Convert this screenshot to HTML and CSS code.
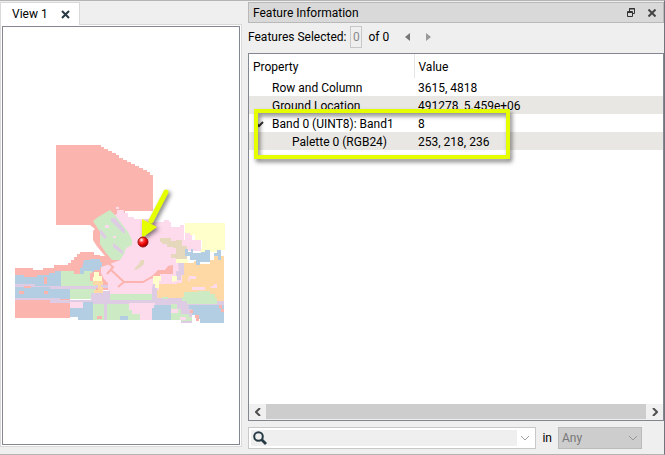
FILE: index.html
```html
<!DOCTYPE html>
<html lang="en">

<head>
    <meta charset="UTF-8" />
    <meta name="viewport" content="width=device-width, initial-scale=1.0" />
    <title>Feature Information</title>
    <link rel="stylesheet" href="styles.css">
</head>

<body>
    <section class="view">
        <div class="tab">
            <span>View 1</span>
            <button class="icon-btn" aria-label="Close view">
                <svg width="9" height="9" viewBox="0 0 9 9"><path d="M1 1L8 8M8 1L1 8" stroke="#263a45" stroke-width="2" /></svg>
            </button>
        </div>
        <div class="view-body">
            <div class="canvas">
                <svg class="map" width="212" height="181" viewBox="15 145 212 181">
                    <!-- base areas -->
                    <path fill="#fbb4ae" d="M56 145H101V147H104V149H108V151H112V153H116V155H119V158H123V160H127V162H131V164H135V166H139V168H143V170H147V172H150V175H153V211H125V264H114L105 256L100 250L96 245L93 240V231L95 229L90 225H56z" />
                    <path fill="#fbb4ae" d="M15 268H33V270H43V268H54V265H68V263H71V260H74V257H77V254H80V252H94V255H100V256H108V258H114V270H110V290H70V318H15z" />
                    <path fill="#fddaec" d="M112 216L117 214V210H124V213H128V217H134V219H150V222H164V220H169V222H171V227H180V225H184V262H186V300H108V283L104 279L101 273V267L110 264L120 260z" />
                    <!-- west blocks -->
                    <path fill="#b3cde3" d="M15 275H24V277H37V275H49V273H55V271H61V287H70V299H15z" />
                    <path fill="#b3cde3" d="M84 260H90V259H100V262H102V267H100V270H94V272H84V274H80V268H82z" />
                    <path fill="#ccebc5" d="M61 271H74V274H84V271H92V277H96V299H70V287H61z" />
                    <path fill="#decbe4" d="M15 284H35V286H96V289H50V287H15zM15 298H60V300H91V293H96V291H110V300H154V304H15zM96 285H108V288H96z" />
                    <path fill="#fbb4ae" d="M15 300H50V303H70V318H15zM24 286H31V288H24zM44 277H47V284H44zM19 291H24V294H19zM44 291H48V294H44zM90 273H94V281H90z" />
                    <path fill="#fddaec" d="M70 302H83V308H70z" />
                    <path fill="#b3cde3" d="M70 308H83V302H93V320H78V317H70z" />
                    <path fill="#ccebc5" d="M93 304H104V320H93zM106 304H130V310H132V314H140V320H106z" />
                    <path fill="#decbe4" d="M104 303H107V320H104z" />
                    <path fill="#ffffcc" d="M94 272H99V276H102V281H93V277H94z" />
                    <path fill="#fed9a6" d="M93 281H103V285H101V287H103V293H94V290H98V285H93z" />
                    <!-- centre -->
                    <path fill="#fbb4ae" d="M97 316H102V319H97z" />
                    <path fill="#ccebc5" d="M93 221L98 217L110 210L114 214L122 224L128 232L132 240V245L126 248L124 254L120 260H112L106 253L100 244V232z" />
                    <path fill="#decbe4" d="M111 218L115 218L119 223L125 230V234L121 231L111 221zM100 229L103 232L107 237L105 239L100 234zM113 243L116 245L124 252L122 254L113 247z" />
                    <path fill="#fddaec" d="M105 225H109V228H105zM113 236H116V238H113zM116 207H119V209H116z" />
                    <path fill="none" stroke="#fbb4ae" stroke-width="2" d="M107 262L113 267L107 274M110 269L124 282L118 287M124 282H143L157 274" />
                    <path fill="#fbb4ae" d="M153 275L158 270H165L168 266L173 265V274H160V276L150 279z" />
                    <path fill="#e5d8bd" d="M160 238H171V241H176V240H182V246H187V260H176V258H171V254H176V248H173V247H167V244H162V242H160zM134 269L138 265L141 260H144V264L141 267L136 270z" />
                    <!-- east blocks -->
                    <path fill="#ffffcc" d="M185 223H225V250H217V252H200V249H202V240H195V235H190V233H185zM176 259H188V263H176z" />
                    <path fill="#fddaec" d="M185 233H190V235H192V240H201V251H187V246H182V240H185z" />
                    <path fill="#fed9a6" d="M182 263H194V261H196V264H210V260H214V256H224V302H185V300H155V290H159V284H177V283H182z" />
                    <path fill="#b3cde3" d="M185 249H188V252H191V249H193V253H201V252H205V250H210V262H200V265H196V260H190V256H185zM214 253H217V250H221V260H218V256H214z" />
                    <path fill="#decbe4" d="M178 263H184V275H181V280H176V271H179zM153 284H157V300H152V289z" />
                    <path fill="#ffffcc" d="M153 276H161V281H159V288H155V284H153zM172 276H177V281H174V282H172z" />
                    <path fill="#fddaec" d="M189 276H196V279H190V281H188zM192 287H205V290H192zM211 286H214V284H217V288H211z" />
                    <path fill="#ccebc5" d="M110 294H152V300H110z" />
                    <path fill="#decbe4" d="M152 298H182V301H224V305H152zM171 304H192V323H181V311H171z" />
                    <path fill="#ccebc5" d="M184 292H198V291H210V294H215V298H217V304H187V301H182V297H184zM162 297H168V299H162z" />
                    <path fill="#fddaec" d="M129 303H155V308H152V320H140V314H132V310H129z" />
                    <path fill="#ccebc5" d="M171 304H177V309H181V314H189V317H192V321H181V320H171z" />
                    <path fill="#b3cde3" d="M120 316H128V320H120zM152 308H154V305H171V320H152zM189 305H224V323H200V319H197V315H192V309H189z" />
                    <path fill="#fddaec" d="M171 309H178V313H171zM180 317H186V320H180z" />
                    <path fill="#fbb4ae" d="M219 305H222V309H224V312H221V308H219zM190 310H193V313H190zM195 315H199V321H196V318H195z" />
                    <!-- arrow and picked point -->
                    <g class="arrow">
                        <path d="M166 192L151 221" stroke="#e6ff00" stroke-width="5" stroke-linecap="round" />
                        <path d="M142 238L142 219L157 227z" fill="#e6ff00" />
                    </g>
                    <defs>
                        <radialGradient id="ball" cx=".35" cy=".3" r=".7">
                            <stop offset="0" stop-color="#fff" />
                            <stop offset=".35" stop-color="#ff3b3b" />
                            <stop offset=".7" stop-color="#e80000" />
                            <stop offset="1" stop-color="#900000" />
                        </radialGradient>
                    </defs>
                    <circle cx="143" cy="242" r="5" fill="url(#ball)" stroke="#9c1010" />
                </svg>
            </div>
        </div>
    </section>

    <section class="info">
        <header class="title-bar">
            <h1>Feature Information</h1>
            <button class="icon-btn" aria-label="Float panel">
                <svg width="8" height="9" viewBox="0 0 8 9" fill="none" stroke="#333"><path d="M2.5 3V.5H7.5V5.5H6M2 1H8" /><path d="M.5 3.5H5.5V8.5H.5zM0 4.5H6" /></svg>
            </button>
            <button class="icon-btn" aria-label="Close panel">
                <svg width="8" height="8" viewBox="0 0 8 8"><path d="M.5 .5L7.5 7.5M7.5 .5L.5 7.5" stroke="#444" stroke-width="2" /></svg>
            </button>
        </header>

        <div class="selected">
            <label for="current">Features Selected:</label>
            <input id="current" type="text" value="0" disabled>
            <span>of 0</span>
            <button class="icon-btn" aria-label="Previous">
                <svg width="5" height="8" viewBox="0 0 5 8"><path d="M5 0V8L0 4z" fill="#777" /></svg>
            </button>
            <button class="icon-btn" aria-label="Next">
                <svg width="5" height="8" viewBox="0 0 5 8"><path d="M0 0V8L5 4z" fill="#999" /></svg>
            </button>
        </div>

        <div class="table-box">
            <table>
                <thead>
                    <tr>
                        <th class="property">Property</th>
                        <th>Value</th>
                    </tr>
                </thead>
                <tbody>
                    <tr>
                        <td class="level1">Row and Column</td>
                        <td>3615, 4818</td>
                    </tr>
                    <tr>
                        <td class="level1">Ground Location</td>
                        <td>491278, 5.459e+06</td>
                    </tr>
                    <tr>
                        <td class="band"><svg width="8" height="7" viewBox="0 0 8 7"><path d="M1 3L3 5L7 1" fill="none" stroke="#333" stroke-width="2" /></svg>Band 0 (UINT8): Band1</td>
                        <td>8</td>
                    </tr>
                    <tr>
                        <td class="level2">Palette 0 (RGB24)</td>
                        <td>253, 218, 236</td>
                    </tr>
                </tbody>
            </table>
            <div class="highlight"></div>
            <div class="scrollbar">
                <button class="icon-btn" aria-label="Scroll left">
                    <svg width="6" height="8" viewBox="0 0 6 8"><path d="M5 0L1 4L5 8" fill="none" stroke="#505050" stroke-width="2" /></svg>
                </button>
                <div class="thumb"></div>
                <button class="icon-btn" aria-label="Scroll right">
                    <svg width="6" height="8" viewBox="0 0 6 8"><path d="M1 0L5 4L1 8" fill="none" stroke="#505050" stroke-width="2" /></svg>
                </button>
            </div>
        </div>

        <div class="search">
            <div class="search-box">
                <svg width="14" height="14" viewBox="0 0 14 14" fill="none" stroke="#263a45"><circle cx="5.5" cy="5.5" r="4.3" stroke-width="2" /><path d="M8.5 8.5L13 13" stroke-width="2.8" /></svg>
                <input type="text" aria-label="Search" disabled>
                <button class="icon-btn" aria-label="Recent searches">
                    <svg width="10" height="6" viewBox="0 0 10 6"><path d="M1 1L5 5L9 1" fill="none" stroke="#a0a0a0" /></svg>
                </button>
            </div>
            <label for="field">in</label>
            <div class="field">
                <select id="field" disabled>
                    <option>Any</option>
                </select>
                <svg width="10" height="6" viewBox="0 0 10 6"><path d="M1 1L5 5L9 1" fill="none" stroke="#999" /></svg>
            </div>
        </div>
    </section>
</body>

</html>
```
FILE: styles.css
```css
:root{
    --bg: #efefef;
    --frame: #828790;
    --line: #c8c8c8;
    --mark: #e6ff00;
}

*{
    margin: 0;
    padding: 0;
    box-sizing: border-box;
}
body{
    display: grid;
    grid-template-columns: 242px 1fr;
    gap: 6px;
    min-height: 100vh;
    background-color: var(--bg);
    border-top: 1px solid #b4b4b4;
    border-bottom: 1px solid #b4b4b4;
    border-right: 1px solid #70747e;
    color: black;
    font-family: Roboto, "Open Sans", sans-serif;
    font-size: 12px;
    line-height: 16px;
}
input, select, button{
    font: inherit;
}
svg{
    display: block;
}
.icon-btn{
    display: flex;
    align-items: center;
    justify-content: center;
    background: none;
    border: none;
}

/* map view */
.view{
    display: flex;
    flex-direction: column;
    padding: 1px 0 7px;
}
.tab{
    display: flex;
    align-items: center;
    justify-content: space-between;
    width: 80px;
    height: 23px;
    margin-bottom: -1px;
    padding: 0 9px 0 11px;
    background-color: white;
    border: 1px solid #d9d9d9;
    border-bottom: none;
    z-index: 1;
}
.view-body{
    display: flex;
    flex: 1;
    padding: 1px;
    background-color: white;
    border: 1px solid #d9d9d9;
}
.canvas{
    display: flex;
    flex: 1;
    align-items: center;
    justify-content: center;
    border: 1px solid var(--frame);
}
.arrow{
    filter: drop-shadow(2px 2px 2px rgba(0, 0, 0, .5));
}

/* feature information */
.info{
    display: flex;
    flex-direction: column;
    padding: 1px 0 5px;
}
.title-bar{
    display: flex;
    align-items: center;
    gap: 13px;
    height: 21px;
    padding: 0 7px 0 4px;
    background-color: #d9d9d9;
    border: 1px solid #b9b9b9;
}
.title-bar h1{
    flex: 1;
    font-size: 12px;
    font-weight: normal;
}
.selected{
    display: flex;
    align-items: center;
    height: 30px;
    padding-bottom: 2px;
}
.selected input{
    width: 12px;
    height: 22px;
    margin: 0 6px 0 4px;
    background-color: var(--bg);
    border: 1px solid var(--line);
    color: #888;
    text-align: center;
}
.selected .icon-btn{
    width: 5px;
    margin-left: 16px;
}
.table-box{
    position: relative;
    display: flex;
    flex: 1;
    flex-direction: column;
    background-color: white;
    border: 1px solid var(--frame);
}
table{
    width: 100%;
    table-layout: fixed;
    border-collapse: collapse;
}
th{
    height: 24px;
    padding: 2px 0 0 4px;
    font-weight: normal;
    text-align: left;
}
.property{
    width: 165px;
    border-right: 1px solid #e5e5e5;
}
td{
    height: 18px;
    padding: 2px 0 0 4px;
}
tbody tr:nth-child(even){
    background-color: #e9e7e3;
}
.level1{
    padding-left: 23px;
}
.level2{
    padding-left: 43px;
}
.band{
    display: flex;
    align-items: center;
    gap: 8px;
    padding-left: 7px;
}
.highlight{
    position: absolute;
    top: 55px;
    left: 5px;
    width: 256px;
    height: 50px;
    border: 4px solid var(--mark);
    filter: drop-shadow(2px 3px 2px rgba(0, 0, 0, .5));
}
.scrollbar{
    display: flex;
    height: 16px;
    margin-top: auto;
    padding-bottom: 1px;
    background-color: #f0f0f0;
}
.scrollbar .icon-btn{
    width: 17px;
}
.thumb{
    flex: 1;
    background-color: #cdcdcd;
}

/* search row */
.search{
    display: flex;
    align-items: center;
    gap: 6px;
    margin-top: 6px;
    padding-right: 22px;
}
.search-box{
    display: flex;
    flex: 1;
    align-items: center;
    height: 22px;
    padding: 2px;
    background-color: white;
    border: 1px solid var(--line);
}
.search-box svg{
    flex: none;
}
.search-box > svg{
    width: 18px;
    height: 16px;
    padding: 1px 2px;
    background-color: var(--bg);
}
.search-box input{
    flex: 1;
    min-width: 0;
    height: 16px;
    background-color: var(--bg);
    border: none;
}
.search-box .icon-btn{
    width: 16px;
}
.field{
    display: grid;
    align-items: center;
    width: 84px;
}
.field select, .field svg{
    grid-area: 1 / 1;
}
.field select{
    appearance: none;
    height: 22px;
    padding: 0 3px;
    background-color: #cdcdcd;
    border: 1px solid #bbb;
    border-radius: 0;
    color: #777;
    opacity: 1;
}
.field svg{
    justify-self: end;
    margin-right: 4px;
    pointer-events: none;
}
```
